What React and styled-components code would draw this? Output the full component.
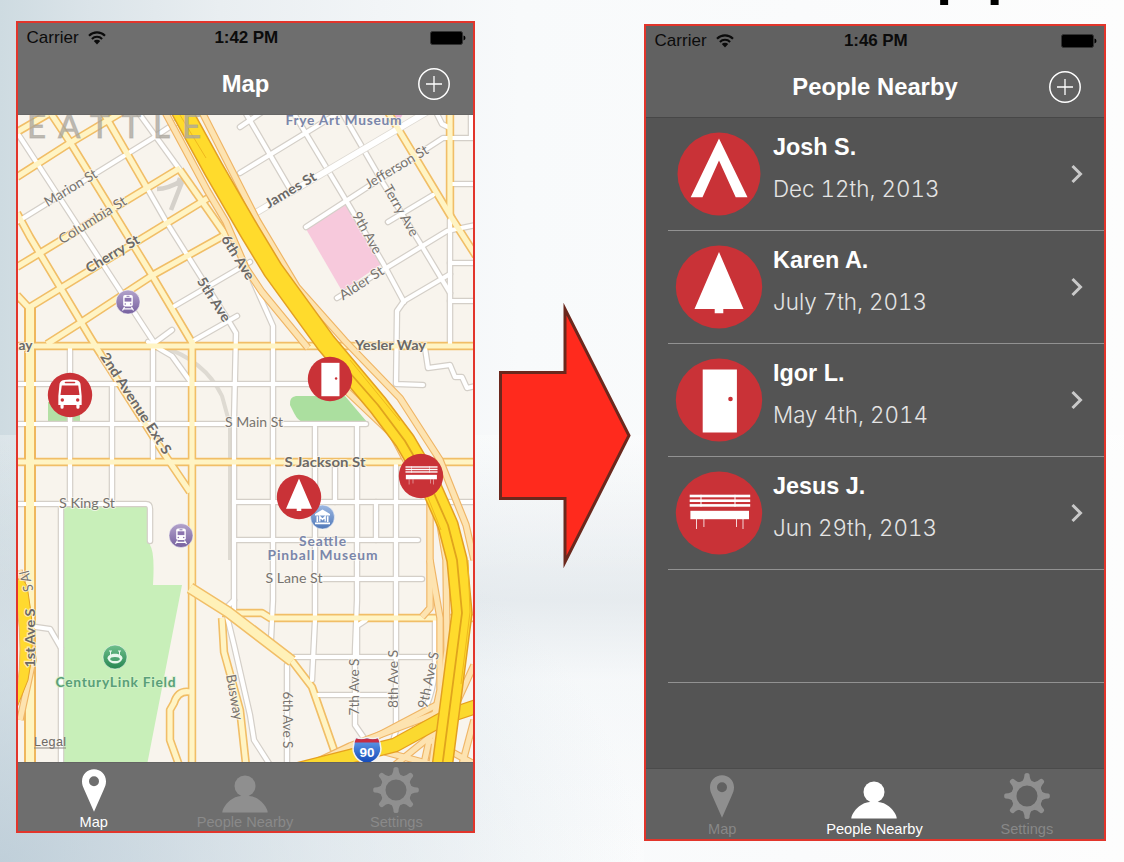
import React from 'react';
import styled, { createGlobalStyle } from 'styled-components';

const GlobalStyle = createGlobalStyle`
  * { box-sizing: border-box; }
  html, body { margin: 0; padding: 0; }
  body { font-family: "Liberation Sans", Arial, sans-serif; overflow: hidden; }
`;

const Slide = styled.main`
  width: 1124px;
  height: 862px;
  overflow: hidden;
  background:
    radial-gradient(ellipse 640px 420px at 0 100%, rgba(184, 201, 213, 0.75) 0, rgba(205, 218, 226, 0.45) 50%, rgba(225, 232, 237, 0) 100%) no-repeat,
    linear-gradient(to bottom, rgba(255, 255, 255, 0) 435px, rgba(255, 255, 255, 0.28) 435px, rgba(255, 255, 255, 0) 580px) no-repeat,
    linear-gradient(to bottom, rgba(218, 225, 230, 0) 435px, rgba(218, 225, 230, 0.6) 600px, rgba(238, 242, 245, 0.3) 680px, rgba(255, 255, 255, 0.2) 862px) 0 0 / 644px 100% no-repeat,
    linear-gradient(to right, #cedbe1 0, #dbe4e9 90px, #e9eef1 220px, #f2f5f7 380px, #f8fafb 520px, #fafbfc 800px, #fdfdfd 1124px);
`;

const TitleStrip = styled.header`
  height: 5px;
  overflow: hidden;
  padding-left: 934px;
`;

const SlideTitle = styled.div`
  margin-top: -91px;
  font-size: 91px;
  line-height: 1;
  color: #000;
`;

const Stage = styled.section`
  display: flex;
  align-items: flex-start;
  padding: 16px 0 0 16px;
`;

const Phone = styled.article`
  display: flex;
  flex-direction: column;
  flex: none;
  width: ${(p) => p.$width}px;
  height: ${(p) => p.$height}px;
  margin: ${(p) => p.$margin || '0'};
  border: 2px solid #e2352b;
  background: ${(p) => p.$bg};
`;

const TopBar = styled.div`
  flex: none;
  height: ${(p) => p.$height}px;
  background: ${(p) => p.$bg};
  border-bottom: 1px solid ${(p) => p.$line};
`;

const StatusBar = styled.div`
  display: grid;
  grid-template-columns: 1fr auto 1fr;
  align-items: center;
  height: 30px;
  padding: 0 7px 0 8.5px;
  color: #0b0b0b;
`;

const Carrier = styled.div`
  display: flex;
  align-items: center;
  gap: 9px;
  font-size: 17px;
  letter-spacing: 0.05px;
`;

const Clock = styled.div`
  font-size: 17px;
  font-weight: 700;
  letter-spacing: -0.1px;
`;

const BatterySlot = styled.div`
  display: flex;
  justify-content: flex-end;
`;

const NavBar = styled.div`
  display: grid;
  grid-template-columns: 34px 1fr 34px;
  align-items: center;
  height: 61px;
  padding: 0 22px;
`;

const NavTitle = styled.h1`
  grid-column: 2;
  margin: 0;
  text-align: center;
  font-size: 23.8px;
  line-height: 30px;
  font-weight: 700;
  color: #fff;
`;

const MapArea = styled.div`
  position: relative;
  flex: 1;
  overflow: hidden;
  background: #f8f4ed;
`;

const Pin = styled.div`
  position: absolute;
  left: ${(p) => p.$x - 18 - 23}px;
  top: ${(p) => p.$y - 115 - 23}px;
  width: 46px;
  height: 46px;
`;

const TabBar = styled.nav`
  display: flex;
  flex: none;
  height: ${(p) => p.$height}px;
  padding-right: ${(p) => p.$inset || 0}px;
  background: ${(p) => p.$bg};
  border-top: 1px solid ${(p) => p.$line};
`;

const Tab = styled.div`
  display: flex;
  flex: 1;
  flex-direction: column;
  align-items: center;
  padding-top: 3px;
  color: ${(p) => (p.$active ? '#fff' : '#8f8f8f')};
  svg { display: block; flex: none; }
`;

const TabLabel = styled.span`
  margin-top: ${(p) => p.$gap}px;
  font-size: 14.6px;
  line-height: 17px;
  white-space: nowrap;
  opacity: ${(p) => (p.$active ? 1 : 0.85)};
`;

const List = styled.div`
  flex: 1;
  padding-left: 22px;
`;

const Row = styled.div`
  display: flex;
  height: 113px;
  border-bottom: 1px solid #929292;
`;

const Avatar = styled.div`
  width: 90px;
  height: 88px;
  margin: 11.5px 9.5px 0 5.5px;
  svg { display: block; }
`;

const Person = styled.div`
  flex: 1;
  padding-top: 14px;
  color: #fff;
`;

const PersonName = styled.div`
  font-size: 23.4px;
  line-height: 30px;
  font-weight: 700;
`;

const PersonDate = styled.div`
  margin-top: 12px;
  font-family: Inter, "Liberation Sans", sans-serif;
  font-weight: 300;
  font-size: 22.4px;
  font-variant-numeric: tabular-nums;
  line-height: 30px;
  color: #e4e4e4;
`;

const Chevron = styled.div`
  margin: 46px 20px 0 0;
  svg { display: block; }
`;

const ArrowBox = styled.div`
  flex: none;
  margin: 279px 0 0 22px;
  svg { display: block; }
`;

const Wifi = () => (
  <svg width="18" height="14" viewBox="0 0 18 14">
    <path d="M1 4.7a11.3 11.3 0 0 1 16 0M3.9 7.9a7.2 7.2 0 0 1 10.2 0" fill="none" stroke="currentColor" strokeWidth="2.1" />
    <path d="M9 13.4 5.8 10.1a4.6 4.6 0 0 1 6.4 0Z" fill="currentColor" />
  </svg>
);

const Battery = () => (
  <svg width="36" height="14" viewBox="0 0 36 14">
    <rect x="0.5" y="0.5" width="32" height="13" rx="2" fill="#000" stroke="#333" />
    <path d="M33.5 4.6q2 .5 2 2.4t-2 2.4Z" fill="#000" />
  </svg>
);

const PlusCircle = () => (
  <svg width="34" height="34" viewBox="0 0 34 34" fill="none" stroke="#fff">
    <circle cx="17" cy="17" r="15.2" strokeWidth="1.5" />
    <path d="M17 9v16M9 17h16" strokeWidth="1.3" />
  </svg>
);

const MapPinIcon = () => (
  <svg width="48" height="48" viewBox="0 0 48 48">
    <path fillRule="evenodd" fill="currentColor" d="M24 3.2c-6.800 0-12 5.200-12 12 0 3 .8 5.300 2.200 8.200L24 45.800l9.800-22.400c1.400-2.900 2.200-5.200 2.200-8.200 0-6.800-5.200-12-12-12Zm0 7a5 5 0 1 1 0 10 5 5 0 0 1 0-10Z" />
  </svg>
);

const PersonIcon = () => (
  <svg width="48" height="48" viewBox="0 0 48 48" fill="currentColor">
    <circle cx="24" cy="20" r="10.500" />
    <path d="M1.300 46.500C1.300 42 9 30.500 20 30h8C39 30.500 46.700 42 46.700 46.500Z" />
  </svg>
);

const GearIcon = () => (
  <svg width="48" height="48" viewBox="0 0 48 48">
    <circle cx="24" cy="24" r="13.100" fill="none" stroke="currentColor" strokeWidth="5.200" />
    {[0, 45, 90, 135, 180, 225, 270, 315].map((a) => (
      <path key={a} transform={`rotate(${a} 24 24)`} fill="currentColor" d="M18 10.200q3.200-1.500 3.500-7.600Q21.600 1.100 24 1.100t2.500 1.500q.3 6.100 3.500 7.600Z" />
    ))}
  </svg>
);

const glyphs = {
  tent: <path fill="#fff" d="M0-35.500 28.500 23.300H16.700L0-13.500-16.500 23.300H-28.300Z" />,
  tree: <path fill="#fff" d="M0-35 24.500 22H4.300V26.200H-4.300V22H-24.500Z" />,
  door: (
    <g>
      <rect x="-16.300" y="-30.500" width="34.200" height="63" fill="#fff" />
      <circle cx="11.500" cy="-1" r="2.300" fill="#c93237" />
    </g>
  ),
  bench: (
    <g fill="#fff">
      <rect x="-29.300" y="-18.300" width="60.500" height="2.600" />
      <rect x="-29.300" y="-13.600" width="60.500" height="2.600" />
      <rect x="-29.300" y="-8.900" width="60.500" height="2.600" />
      <path d="M-18.500-18.300h1v12h-1ZM15.500-18.300h1v12h-1Z" />
      <rect x="-28.600" y="-2.200" width="58.600" height="8.400" />
      <path d="M-23 6h1v10h-1ZM-15.600 6h1v8h-1ZM17 6h1v8h-1ZM23.500 6h1v10h-1Z" opacity=".8" />
    </g>
  ),
  bus: (
    <g>
      <path fill="#fff" d="M-20-19q0-8 9-9.500 11-1.800 22 0 9 1.500 9 9.500L22 2v17h-4v4q0 3-3 3t-3-3v-4h-24v4q0 3-3 3t-3-3v-4h-4V2Z" />
      <rect x="-10" y="-25" width="20" height="3" rx="1.500" fill="#c93237" />
      <path d="M-15.500-18h31l2.500 18h-36Z" fill="#c93237" />
      <circle cx="-14.500" cy="9.500" r="3.300" fill="#c93237" />
      <circle cx="14.500" cy="9.500" r="3.300" fill="#c93237" />
    </g>
  ),
};

const Badge = ({ kind, width, height, scale = 1, rx, ry }) => (
  <svg width={width} height={height} viewBox={`${-width / 2} ${-height / 2} ${width} ${height}`}>
    <ellipse rx={rx} ry={ry} fill="#c93237" />
    <g transform={`scale(${scale})`}>{glyphs[kind]}</g>
  </svg>
);

const whiteRoads = [
  'M18 134 155 344', 'M138 112 180 170', 'M147 188 167 223 230 323 236 333 234 420 234 612', 'M17 222 153 138 180 120',
  'M173 307 250 262', 'M193 341 237 316', 'M153 344 172 330', 'M240 173 335 115', 'M240 127 262 112', 'M245 112 290 189',
  'M293 112 347 202 383 263 404 302', 'M343 114 383 183 420 243 450 293', 'M306 227 443 138 476 138', 'M337 298 447 231 476 225',
  'M388 222 433 195', 'M450 274 404 301 397 311 396 384 423 385', 'M450 220V345', 'M450 184h26M450 263h26M450 301h26',
  'M436 112l6 12 8 4M471 112v24', 'M253 281 273 326V600L271 640', 'M425 348 428 368 450 365 455 377 462 377 467 388 476 386',
  'M17 384H310', 'M17 424H230', 'M284 424H366', 'M17 504H146Q150 504 150 509V541', 'M234 502H476', 'M234 540H418', 'M315 579H422',
  'M70 346V500M112 384V500M153 343V460', 'M148 342 172 356 190 381', 'M61 507V765', 'M36 627 50 629 61 648',
  'M315 427V620L312 680', 'M357 425V600L355 650V725L364 738', 'M396 465V730L393 742', 'M335 468V502M376 502V540',
  'M357 660 357 626 366 620', 'M435 618V665Q434 700 415 726', 'M294 657H430', 'M318 695H390', 'M287 665V765', 'M226 612 234 645 250 715 254 740 270 765',
  'M234 600 224 610',
];

const yellowRoads = [
  'M17 132 48 114', 'M17 177 70 143 122 112', 'M50 112 70 142 153 277 194 346', 'M103 112 147 188', 'M17 267 180 168', 'M30 307 208 198',
  'M47 344 80 323 153 275 223 236', 'M180 170 227 237', 'M17 213 30 237 90 337 98 350 165 455 190 492', 'M17 295 30 309',
  'M388 112 453 220 476 256', 'M450 112V215', 'M17 346H476', 'M17 462H476', 'M192 340V765', 'M222 613H262L270 618H476',
  'M190 588 228 612 292 661 312 687 334 750', 'M222 618 224 652 240 710 246 765', 'M190 692Q178 690 174 703L170 710V740L179 765',
];

const ramps = [
  'M165 112 207 190 226 222 246 268 262 292 308 348', 'M202 112 257 220 297 287 345 341 400 398 440 460 466 525 474 560',
  'M335 380 392 434 410 468', 'M430 490V608L422 617', 'M430 560 440 618 440 690 424 764', 'M436 500 446 560 447 650 432 764',
  'M366 742 442 702', 'M310 765 350 746 440 712', 'M474 720 462 765', 'M395 765 448 722 474 665', 'M430 740 474 764M385 752 430 764',
  'M19 570 33 660 20 720',
];

const freeway = 'M180 108 214 170 250 232 273 270 326 343 378 405 405 441 429 482 448 525 457 560 462 613 453 683 442 768';

const labels = [
  { t: 'Marion St', x: 73, y: 192, r: -31, w: 59 },
  { t: 'Columbia St', x: 95, y: 224, r: -32, w: 77 },
  { t: 'Cherry St', x: 115, y: 258, r: -31, w: 60, b: 1 },
  { t: '6th Ave', x: 234, y: 260, r: 58, w: 50, b: 1 },
  { t: '5th Ave', x: 210, y: 302, r: 57, w: 50, b: 1 },
  { t: 'James St', x: 293, y: 194, r: -31, w: 57, b: 1 },
  { t: 'Jefferson St', x: 399, y: 171, r: -31, w: 71 },
  { t: 'Terry Ave', x: 397, y: 213, r: 60, w: 57 },
  { t: '9th Ave', x: 363, y: 235, r: 61, w: 46 },
  { t: 'Alder St', x: 364, y: 287, r: -33, w: 50 },
  { t: 'Yesler Way', x: 390.5, y: 350, r: 0, w: 71, b: 1 },
  { t: 'ay', x: 25.5, y: 350, r: 0, w: 14, b: 1 },
  { t: '2nd Avenue Ext S', x: 132, y: 406, r: 57, w: 118, b: 1 },
  { t: 'S Main St', x: 254, y: 427, r: 0, w: 58 },
  { t: 'S Jackson St', x: 325, y: 467, r: 0, w: 81, b: 1 },
  { t: 'S King St', x: 87, y: 508, r: 0, w: 56 },
  { t: 'S Lane St', x: 294, y: 583, r: 0, w: 57 },
  { t: '1st Ave S', x: 35, y: 638, r: -90, w: 59, b: 1 },
  { t: '7th Ave S', x: 359, y: 687, r: -90, w: 57 },
  { t: '8th Ave S', x: 398, y: 679, r: -90, w: 58 },
  { t: '9th Ave S', x: 433, y: 681, r: -78, w: 57 },
  { t: '6th Ave S', x: 283, y: 720, r: 90, w: 57 },
  { t: 'Busway', x: 230, y: 698, r: 80, w: 46 },
  { t: 'S Al', x: 31, y: 580, r: -104, w: 21 },
];

const MapLabel = ({ label }) => (
  <text
    transform={`translate(${label.x} ${label.y}) rotate(${label.r})`}
    textAnchor="middle"
    textLength={label.w}
    lengthAdjust="spacingAndGlyphs"
    fontSize="13.8"
    fontWeight={label.b ? 700 : 400}
    fill={label.b ? '#6b6967' : '#77736e'}
    stroke="#fbf8f2"
    strokeWidth="2"
    strokeOpacity="0.7"
    paintOrder="stroke"
  >
    {label.t}
  </text>
);

const Poi = ({ x, y, fill, children }) => (
  <g transform={`translate(${x} ${y})`}>
    <circle r="12" fill={fill} stroke="#fff" strokeOpacity=".5" />
    {children}
  </g>
);

const Train = () => (
  <g>
    <rect x="-4.800" y="-7" width="9.600" height="11.500" rx="1.800" fill="#fff" />
    <rect x="-3.400" y="-4.200" width="6.800" height="3.800" fill="#8b74ae" />
    <rect x="-1.500" y="-6.200" width="3" height="1" fill="#8b74ae" />
    <circle cx="-2.700" cy="2" r=".8" fill="#8b74ae" />
    <circle cx="2.700" cy="2" r=".8" fill="#8b74ae" />
    <path d="M-3.500 5-5.500 8.500M3.500 5 5.500 8.500M-4.500 6.800h9" stroke="#fff" strokeWidth="1.200" />
  </g>
);

const CityMap = () => (
  <svg width="100%" height="100%" viewBox="18 115 455 647" preserveAspectRatio="none" fontFamily='Lato, "Open Sans", sans-serif'>
    <defs>
      <linearGradient id="violet" x1="0" y1="0" x2="0" y2="1"><stop offset="0" stopColor="#b3a3cb" /><stop offset="1" stopColor="#76609f" /></linearGradient>
      <linearGradient id="azure" x1="0" y1="0" x2="0" y2="1"><stop offset="0" stopColor="#9db8e2" /><stop offset="1" stopColor="#5078b8" /></linearGradient>
      <linearGradient id="emerald" x1="0" y1="0" x2="0" y2="1"><stop offset="0" stopColor="#6fbf8c" /><stop offset="1" stopColor="#268651" /></linearGradient>
      <linearGradient id="shield" x1="0" y1="0" x2="0" y2="1"><stop offset="0" stopColor="#69a2ea" /><stop offset="1" stopColor="#0e45b8" /></linearGradient>
    </defs>
    <path d="M64 506H148L150 545Q155 552 153 585H182L147 765H64Z" fill="#c8efb9" />
    <path d="M48 402H80V421H48Z" fill="#b4e0a5" />
    <path d="M296 396Q289 397 290 405L294 413Q298 421 303 422H367L345 396Z" fill="#abdf9f" />
    <path d="M306 229 347 204 383 263 342 291Z" fill="#f7c9dc" />
    <path d="M385 116l18-2-3 5z" fill="#eeb8d8" />
    <path d="M160 346Q205 360 222 396L230 425V560" fill="none" stroke="#dedad2" strokeWidth="4" />
    <g fill="none" strokeLinejoin="round">
      <path d="M157 189Q168 189 183 180M182 182 171 210M177 186 180 178" stroke="#d5d1ca" strokeWidth="4.500" />
      {whiteRoads.map((d) => <path key={d} d={d} stroke="#d4cfc8" strokeWidth="6.600" strokeLinecap="round" />)}
      {yellowRoads.map((d) => <path key={d} d={d} stroke="#f1be67" strokeWidth="8.400" />)}
      <path d="M30 306V765" stroke="#efb75e" strokeWidth="12" />
      {whiteRoads.map((d) => <path key={d} d={d} stroke="#fff" strokeWidth="4.200" strokeLinecap="round" />)}
      <path d="M247 218 430 110" stroke="#dedad3" strokeWidth="7.500" />
      <path d="M247 218 430 110" stroke="#fff" strokeWidth="6" />
      {yellowRoads.map((d) => <path key={d} d={d} stroke="#fff4c4" strokeWidth="5.200" />)}
      <path d="M30 306V765" stroke="#fff4c0" strokeWidth="8" />
      <path d="M190 588 228 612 292 661" stroke="#f1be67" strokeWidth="12" />
      <path d="M190 588 228 612 292 661" stroke="#fff1b8" strokeWidth="9" />
      {ramps.map((d) => <path key={d} d={d} stroke="#efb566" strokeWidth="7.500" />)}
      {ramps.map((d) => <path key={d} d={d} stroke="#fde3b0" strokeWidth="5.200" />)}
      <path d="M14 580Q26 575 28 592Q37 640 28 680L14 715Z" fill="#ffd92f" stroke="#e5a227" />
      <path d="M17 606Q23 650 17 690Z" fill="#f8f4ed" stroke="#efb566" />
      <path d="M288 772 395 745 448 716 478 706" stroke="#e6a01e" strokeWidth="15" />
      <path d="M288 772 395 745 448 716 478 706" stroke="#fbd92f" strokeWidth="12.500" />
      <path d={freeway} stroke="#e3a021" strokeWidth="21.500" />
      <path d={freeway} stroke="#ffdb2c" strokeWidth="18.500" />
      <path d="M343 365 378 405 405 441 429 482 448 525 457 560 462 613 453 683 442 768" stroke="#e0a41d" strokeWidth="1.800" />
      <path d="M180 115 206 158M350 360 400 421M416 468 441 530M468 560 470 612 461 684" stroke="#efb81e" strokeWidth="1" />
    </g>

    <text x="27" y="138" fontSize="33" textLength="174" fill="#aaa69d" fillOpacity=".75" stroke="#aaa69d" strokeOpacity=".6" strokeWidth="1">EATTLE</text>
    {labels.map((l) => <MapLabel key={`${l.t}-${l.x}`} label={l} />)}
    <g fontWeight="700" fill="#7a86aa" fontSize="13.800" textAnchor="middle" stroke="#fbf8f2" strokeWidth="2" strokeOpacity=".7" paintOrder="stroke">
      <text x="343.500" y="125" textLength="116">Frye Art Museum</text>
      <text x="322.500" y="546" textLength="47">Seattle</text>
      <text x="322.500" y="560" textLength="110">Pinball Museum</text>
      <text x="115.500" y="686.500" textLength="120" fill="#5a9f79" stroke="#d4f3c8">CenturyLink Field</text>
    </g>
    <text x="34" y="745.500" fontSize="12.600" textLength="32" fontFamily="Liberation Sans, sans-serif" fill="#6e6a66">Legal</text>
    <path d="M34 748h32" stroke="#8b8782" />

    <Poi x={128} y={302} fill="url(#violet)"><Train /></Poi>
    <Poi x={181} y={535.5} fill="url(#violet)"><Train /></Poi>
    <Poi x={322.5} y={517} fill="url(#azure)">
      <path d="M-7.500-3 0-7.500 7.500-3v1.500h-15ZM-6-.8h1.600V5H-6ZM4.400-.8H6V5H4.400ZM-7.500 5.500h15v1.800h-15Z" fill="#fff" />
      <path d="M-2.700 4.500v-5L0 2.500l2.700-3v5" fill="none" stroke="#fff" strokeWidth="1.300" />
    </Poi>
    <Poi x={115} y={657} fill="url(#emerald)">
      <path d="M-7.500 1.500C-8-5 8-5 7.500 1.500Q5.500 6.500 0 6.500T-7.500 1.500Z" fill="#e9f7ed" />
      <ellipse cy="2" rx="4.800" ry="2" fill="#4ea472" />
      <path d="M-4.500-2v-4M4.500-2v-4M-6-6h3M3-6h3" stroke="#e9f7ed" />
    </Poi>

    <g transform="translate(367 751)">
      <path d="M-11-13.500Q-6-11.500 0-13.500 6-11.500 11-13.500 15-5 13.500 1 11 10 0 13-11 10-13.500 1-15-5-11-13.500Z" fill="url(#shield)" stroke="#f2f2f2" strokeWidth="1.500" />
      <path d="M-11-12.500Q-6-11 0-12.500 6-11 11-12.500L12.500-8.500h-25Z" fill="#c72d43" />
      <text y="5.500" textAnchor="middle" fontFamily="Liberation Sans, sans-serif" fontWeight="700" fontSize="13.500" fill="#fff">90</text>
    </g>
  </svg>
);

const mapPins = [
  { kind: 'bus', x: 70, y: 394.5 },
  { kind: 'door', x: 329.5, y: 379 },
  { kind: 'tree', x: 298.5, y: 496.5 },
  { kind: 'bench', x: 420.5, y: 475.5 },
];

const people = [
  { name: 'Josh S.', date: 'Dec 12th, 2013', kind: 'tent', rx: 41.5 },
  { name: 'Karen A.', date: 'July 7th, 2013', kind: 'tree', rx: 43.2 },
  { name: 'Igor L.', date: 'May 4th, 2014', kind: 'door', rx: 43.2 },
  { name: 'Jesus J.', date: 'Jun 29th, 2013', kind: 'bench', rx: 43.2 },
];

const tabs = [
  { label: 'Map', icon: MapPinIcon },
  { label: 'People Nearby', icon: PersonIcon },
  { label: 'Settings', icon: GearIcon },
];

const Header = ({ time, title, ...bar }) => (
  <TopBar {...bar}>
    <StatusBar>
      <Carrier>Carrier <Wifi /></Carrier>
      <Clock>{time}</Clock>
      <BatterySlot><Battery /></BatterySlot>
    </StatusBar>
    <NavBar>
      <NavTitle>{title}</NavTitle>
      <PlusCircle />
    </NavBar>
  </TopBar>
);

const Tabs = ({ active, gap, ...bar }) => (
  <TabBar {...bar}>
    {tabs.map(({ label, icon: Icon }) => (
      <Tab key={label} $active={label === active}>
        <Icon />
        <TabLabel $active={label === active} $gap={gap}>{label}</TabLabel>
      </Tab>
    ))}
  </TabBar>
);

export default function App() {
  return (
    <Slide>
      <GlobalStyle />
      <TitleStrip><SlideTitle>pp</SlideTitle></TitleStrip>
      <Stage>
        <Phone $width={459} $height={812} $bg="#6e6e6e">
          <Header time="1:42 PM" title="Map" $height={92} $bg="#6e6e6e" $line="#666" />
          <MapArea>
            <CityMap />
            {mapPins.map((p) => (
              <Pin key={p.kind} $x={p.x} $y={p.y}>
                <Badge kind={p.kind} width={46} height={46} rx={22.2} ry={22.2} scale={0.53} />
              </Pin>
            ))}
          </MapArea>
          <Tabs active="Map" gap={0} $height={69} $inset={1} $bg="#6e6e6e" $line="#636363" />
        </Phone>
        <ArrowBox>
          <svg width="140" height="272" viewBox="497 300 140 272">
            <path d="M500.500 372.500H565V309L629 435.500 565 562V498.500H500.500Z" fill="#ff2a1d" stroke="#6b281d" strokeWidth="3" strokeMiterlimit="10" />
          </svg>
        </ArrowBox>
        <Phone $width={462} $height={817} $margin="3px 0 0 7px" $bg="#545454">
          <Header time="1:46 PM" title="People Nearby" $height={92} $bg="#616161" $line="#474747" />
          <List>
            {people.map((p) => (
              <Row key={p.name}>
                <Avatar><Badge kind={p.kind} width={90} height={88} rx={p.rx} ry={41.5} /></Avatar>
                <Person>
                  <PersonName>{p.name}</PersonName>
                  <PersonDate>{p.date}</PersonDate>
                </Person>
                <Chevron>
                  <svg width="14" height="20" viewBox="0 0 14 20">
                    <path d="M2.500 2 10.500 10 2.500 18" fill="none" stroke="#c9c9c9" strokeWidth="3" />
                  </svg>
                </Chevron>
              </Row>
            ))}
            <Row />
          </List>
          <Tabs active="People Nearby" gap={1} $height={71} $inset={1} $bg="#616161" $line="#4b4b4b" />
        </Phone>
      </Stage>
    </Slide>
  );
}
